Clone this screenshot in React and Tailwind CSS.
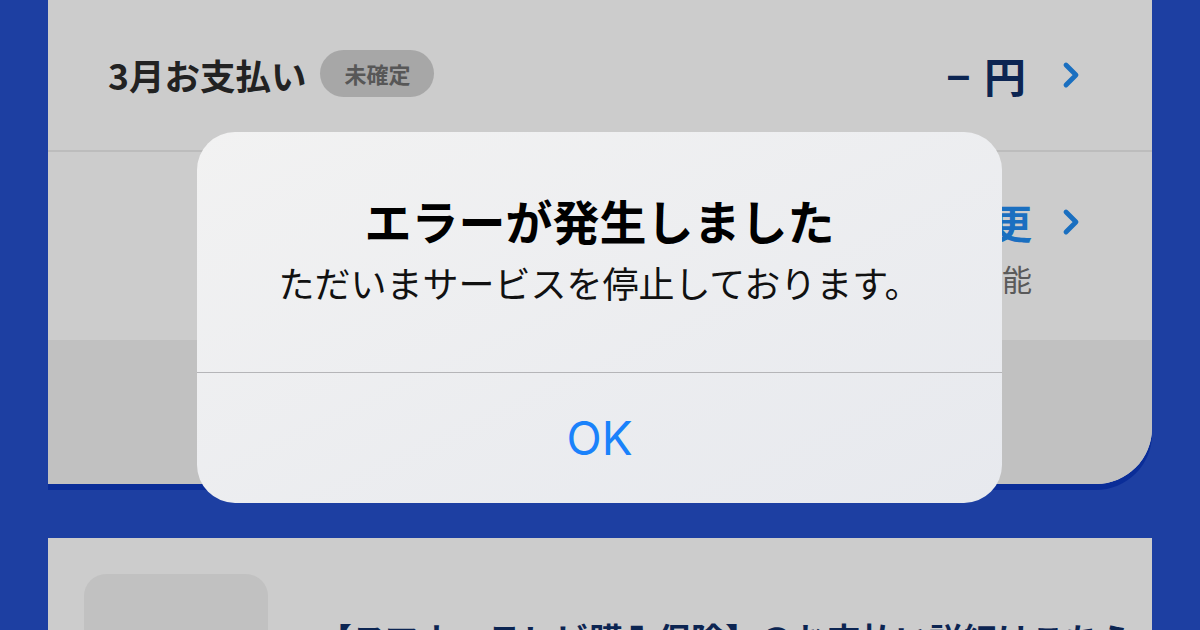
import React from 'react';

const jp = { fontFamily: '"Noto Sans CJK JP", "Noto Sans", sans-serif' };

function Chevron({ className }) {
    return (
        <svg viewBox="0 0 18 28" className={className} fill="none">
            <path d="M4 4l10 10-10 10" stroke="currentColor" strokeWidth="4.8" strokeLinecap="round" strokeLinejoin="round" />
        </svg>
    );
}

export default function App() {
    return (
        <div className="relative w-[1200px] h-[630px] overflow-hidden bg-[#1d3fa2]" style={jp}>
            <div className="px-12 flex flex-col gap-[54px]">
                {/* 支払い情報カード */}
                <div className="h-[484px] flex flex-col bg-[#cccccc] rounded-br-[56px] overflow-hidden shadow-[0_6px_0_#0a2d98]">
                    <div className="h-[150px] flex items-center justify-between pl-[60px] pr-[72px]">
                        <div className="flex items-center gap-[14px]">
                            <span className="text-[35.5px] font-bold text-[#222222] leading-none">3月お支払い</span>
                            <span className="h-[47px] px-[24px] mb-[3px] flex items-center rounded-full bg-[#a7a7a7] text-[22px] font-bold text-[#575757]">未確定</span>
                        </div>
                        <div className="flex items-center gap-[36px]">
                            <div className="flex items-center gap-[14px] text-[#0c2552] font-bold leading-none">
                                <span className="text-[42px]" style={{ fontFamily: '"Liberation Sans", sans-serif' }}>–</span>
                                <span className="text-[42px]">円</span>
                            </div>
                            <Chevron className="w-[18px] h-[28px] text-[#1a6fc0]" />
                        </div>
                    </div>
                    <div className="h-[2px] bg-[#bcbcbc]" />
                    <div className="h-[188px] flex items-start justify-end pr-[72px] pt-[44px]">
                        <div className="flex flex-col items-end">
                            <div className="flex items-center gap-[30px]">
                                <span className="text-[40px] font-bold text-[#1a6fc0] leading-[52px]">変更</span>
                                <Chevron className="w-[18px] h-[28px] text-[#1a6fc0]" />
                            </div>
                            <span className="mr-[48px] mt-[10px] text-[30px] text-[#5a5a5a] leading-[40px]">可能</span>
                        </div>
                    </div>
                    <div className="flex-1 bg-[#c1c1c1]" />
                </div>

                {/* お知らせカード */}
                <div className="h-[200px] bg-[#cccccc] flex gap-[50px] pl-9 pt-9">
                    <div className="w-[184px] h-[184px] shrink-0 rounded-[22px] bg-[#c1c1c1]" />
                    <span className="mt-[42px] text-[34px] font-bold text-[#0c2552] leading-[46px] whitespace-nowrap">【スマホ・テレビ購入保険】のお支払い詳細はこちら</span>
                </div>
            </div>

            {/* エラーダイアログ */}
            <div className="absolute left-[197px] top-[132px] w-[805px] h-[371px] flex flex-col rounded-[38px] overflow-hidden bg-gradient-to-br from-[#f2f2f2] to-[#e7e9ee]">
                <div className="h-[240px] flex flex-col items-center pt-[62px]">
                    <div className="text-[47px] font-bold text-black leading-[52px]">エラーが発生しました</div>
                    <div className="mt-[14px] text-[36px] text-[#111111] leading-[44px]">ただいまサービスを停止しております。</div>
                </div>
                <div className="h-px bg-[#b5b5b8]" />
                <div className="flex-1 flex items-center justify-center">
                    <span className="text-[46px] text-[#1a82fb] leading-none" style={{ fontFamily: 'Inter, "Liberation Sans", sans-serif' }}>OK</span>
                </div>
            </div>
        </div>
    );
}
